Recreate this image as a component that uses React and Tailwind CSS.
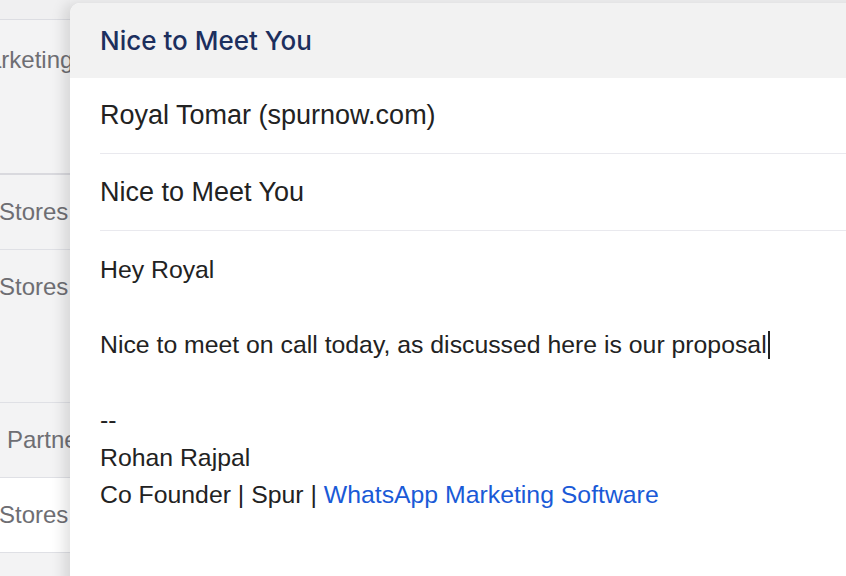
import React from 'react';

const rows = [
  { label: 'Stores', h: 'h-[75px]', bg: 'bg-[#f3f3f4]', pad: 'pt-[24px]' },
  { label: 'Stores', h: 'h-[153px]', bg: 'bg-[#f3f3f4]', pad: 'pt-[24px]' },
  { label: 'Partner', h: 'h-[75px]', bg: 'bg-[#f3f3f4]', pad: 'pt-[24px] pl-[8px]' },
  { label: 'Stores', h: 'h-[75px]', bg: 'bg-white', pad: 'pt-[24px]' },
];

const App = () => {
  return (
    <div
      className="relative w-[846px] h-[576px] overflow-hidden bg-[#f3f3f4]"
      style={{ fontFamily: '"Liberation Sans", Arial, sans-serif' }}
    >
      {/* table behind the modal */}
      <div className="flex flex-col w-[70px] overflow-hidden text-[24px] text-[#6e6e73]">
        <div className="h-[20px] border-b border-[#dcdde2] bg-[#f0f0f1]" />
        <div className="h-[155px] bg-[#f3f3f4] pt-[22px] border-b-2 border-[#d9d9de] whitespace-nowrap">
          <span className="block -ml-[12px]">arketing</span>
        </div>
        {rows.map((r, i) => (
          <div
            key={i}
            className={`${r.h} ${r.bg} ${r.pad} border-b border-[#dfe0e5] whitespace-nowrap leading-[26px]`}
          >
            <span className="block -ml-[1px]">{r.label}</span>
          </div>
        ))}
        <div className="flex-1 h-[40px] bg-[#f3f3f4]" />
      </div>

      {/* modal */}
      <div className="absolute left-[70px] top-[3px] w-[800px] h-[600px] bg-white rounded-tl-[10px] shadow-[-6px_0_14px_rgba(0,0,0,0.12)] flex flex-col">
        <div className="h-[75px] bg-[#f2f2f2] rounded-tl-[10px] pl-[30px] flex items-center">
          <span
            className="text-[26px] font-medium text-[#1c2f5e]"
            style={{ fontFamily: 'Inter, "Noto Sans", sans-serif' }}
          >
            Nice to Meet You
          </span>
        </div>
        <div className="pl-[30px] text-[24.8px] text-[#222222]">
          <div className="h-[76px] flex items-center border-b border-[#e9e9ee] text-[27px]">
            Royal Tomar (spurnow.com)
          </div>
          <div className="h-[77px] flex items-center border-b border-[#e9e9ee] text-[27px]">
            Nice to Meet You
          </div>
          <div className="pt-[20px] leading-[37.5px]">
            <div>Hey Royal</div>
            <div className="h-[37.5px]" />
            <div className="flex items-center">
              <span>Nice to meet on call today, as discussed here is our proposal</span>
              <span className="inline-block w-[2px] h-[28px] bg-[#222222] ml-[1px]" />
            </div>
            <div className="h-[37.5px]" />
            <div>--</div>
            <div>Rohan Rajpal</div>
            <div>
              Co Founder | Spur | <span className="text-[#1a5ad7]">WhatsApp Marketing Software</span>
            </div>
          </div>
        </div>
      </div>
    </div>
  );
};

export default App;
